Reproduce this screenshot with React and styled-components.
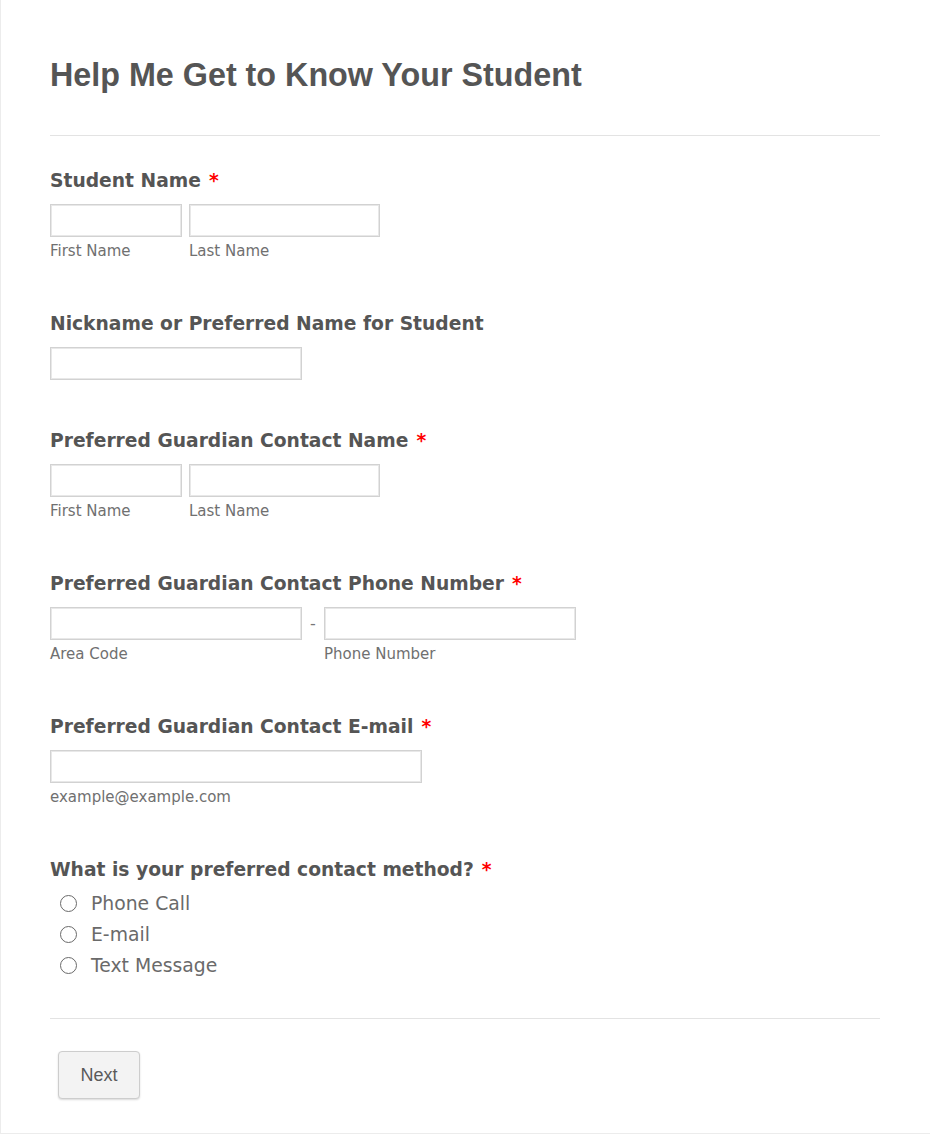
import React, { useState } from "react";
import styled, { createGlobalStyle } from "styled-components";

const GlobalStyle = createGlobalStyle`
  html, body {
    margin: 0;
    padding: 0;
    background: #fff;
  }
`;

const Page = styled.div`
  box-sizing: border-box;
  height: 1134px;
  border-left: 1px solid #ececec;
  border-bottom: 1px solid #ececec;
  padding: 0 50px 0 49px;
  color: #555;
`;

const Title = styled.h1`
  margin: 0 0 41px;
  padding-top: 56px;
  font-family: "Liberation Sans", Arial, sans-serif;
  font-weight: 700;
  font-size: 32.3px;
  line-height: 38px;
  color: #555;
`;

const Rule = styled.div`
  height: 1px;
  background: #e3e3e3;
`;

const Fields = styled.div`
  padding-top: 33px;
`;

const Section = styled.div`
  padding-bottom: ${(p) => p.$bottom ?? 49}px;
`;

const Label = styled.div`
  font-family: "DejaVu Sans", sans-serif;
  font-weight: 700;
  font-size: 18.7px;
  line-height: 24px;
  color: #555;
  margin-bottom: 11px;
`;

const Star = styled.span`
  color: #f00;
  margin-left: 8px;
`;

const Row = styled.div`
  display: flex;
  align-items: flex-start;
  gap: ${(p) => p.$gap ?? 7}px;
`;

const Col = styled.div`
  display: flex;
  flex-direction: column;
`;

const Input = styled.input`
  box-sizing: border-box;
  width: ${(p) => p.$w}px;
  height: 33px;
  border: 1px solid #d2d2d2;
  box-shadow: inset 0 0 0 1px #e8e8e8;
  background: #fff;
  padding: 4px 6px;
  font-size: 15px;
  outline: none;
`;

const Sub = styled.div`
  font-family: "DejaVu Sans", sans-serif;
  font-size: 15px;
  line-height: 24px;
  margin-top: 2px;
  color: #707070;
`;

const Dash = styled.span`
  font-family: "DejaVu Sans", sans-serif;
  font-size: 16px;
  line-height: 33px;
  color: #777;
  width: 22px;
  text-align: center;
`;

const Options = styled.div`
  display: flex;
  flex-direction: column;
  margin-top: -5px;
  padding-left: 10px;
`;

const Option = styled.label`
  display: flex;
  align-items: center;
  height: 31px;
  cursor: pointer;
  font-family: "DejaVu Sans", sans-serif;
  font-size: 18.8px;
  color: #6a6a6a;
`;

const Circle = styled.span`
  box-sizing: border-box;
  flex: none;
  width: 17px;
  height: 17px;
  border-radius: 50%;
  border: 1.3px solid #6a6a6a;
  margin-right: 14px;
  background: ${(p) => (p.$on ? "radial-gradient(circle, #666 0 4px, #fff 4.5px)" : "#fff")};
`;

const Footer = styled.div`
  padding: 32px 0 0 8px;
`;

const Button = styled.button`
  width: 82px;
  height: 48px;
  border: 1px solid #cdcdcd;
  border-radius: 4px;
  background: #f3f3f3;
  box-shadow: 0 1px 2px rgba(0, 0, 0, 0.15);
  font-family: "Liberation Sans", Arial, sans-serif;
  font-size: 18px;
  color: #5a5a5a;
  cursor: pointer;
`;

const methods = ["Phone Call", "E-mail", "Text Message"];

const App = () => {
  const [method, setMethod] = useState("");

  return (
    <>
      <GlobalStyle />
      <Page>
        <Title>Help Me Get to Know Your Student</Title>
        <Rule />
        <Fields>
          <Section>
            <Label>
              Student Name<Star>*</Star>
            </Label>
            <Row>
              <Col>
                <Input $w={132} />
                <Sub>First Name</Sub>
              </Col>
              <Col>
                <Input $w={191} />
                <Sub>Last Name</Sub>
              </Col>
            </Row>
          </Section>

          <Section>
            <Label>Nickname or Preferred Name for Student</Label>
            <Input $w={252} />
          </Section>

          <Section>
            <Label>
              Preferred Guardian Contact Name<Star>*</Star>
            </Label>
            <Row>
              <Col>
                <Input $w={132} />
                <Sub>First Name</Sub>
              </Col>
              <Col>
                <Input $w={191} />
                <Sub>Last Name</Sub>
              </Col>
            </Row>
          </Section>

          <Section>
            <Label>
              Preferred Guardian Contact Phone Number<Star>*</Star>
            </Label>
            <Row $gap={0}>
              <Col>
                <Input $w={252} />
                <Sub>Area Code</Sub>
              </Col>
              <Dash>-</Dash>
              <Col>
                <Input $w={252} />
                <Sub>Phone Number</Sub>
              </Col>
            </Row>
          </Section>

          <Section>
            <Label>
              Preferred Guardian Contact E-mail<Star>*</Star>
            </Label>
            <Col>
              <Input $w={372} />
              <Sub>example@example.com</Sub>
            </Col>
          </Section>

          <Section $bottom={37}>
            <Label>
              What is your preferred contact method?<Star>*</Star>
            </Label>
            <Options>
              {methods.map((m) => (
                <Option key={m} onClick={() => setMethod(m)}>
                  <Circle $on={method === m} />
                  {m}
                </Option>
              ))}
            </Options>
          </Section>
        </Fields>
        <Rule />
        <Footer>
          <Button type="button">Next</Button>
        </Footer>
      </Page>
    </>
  );
};

export default App;
